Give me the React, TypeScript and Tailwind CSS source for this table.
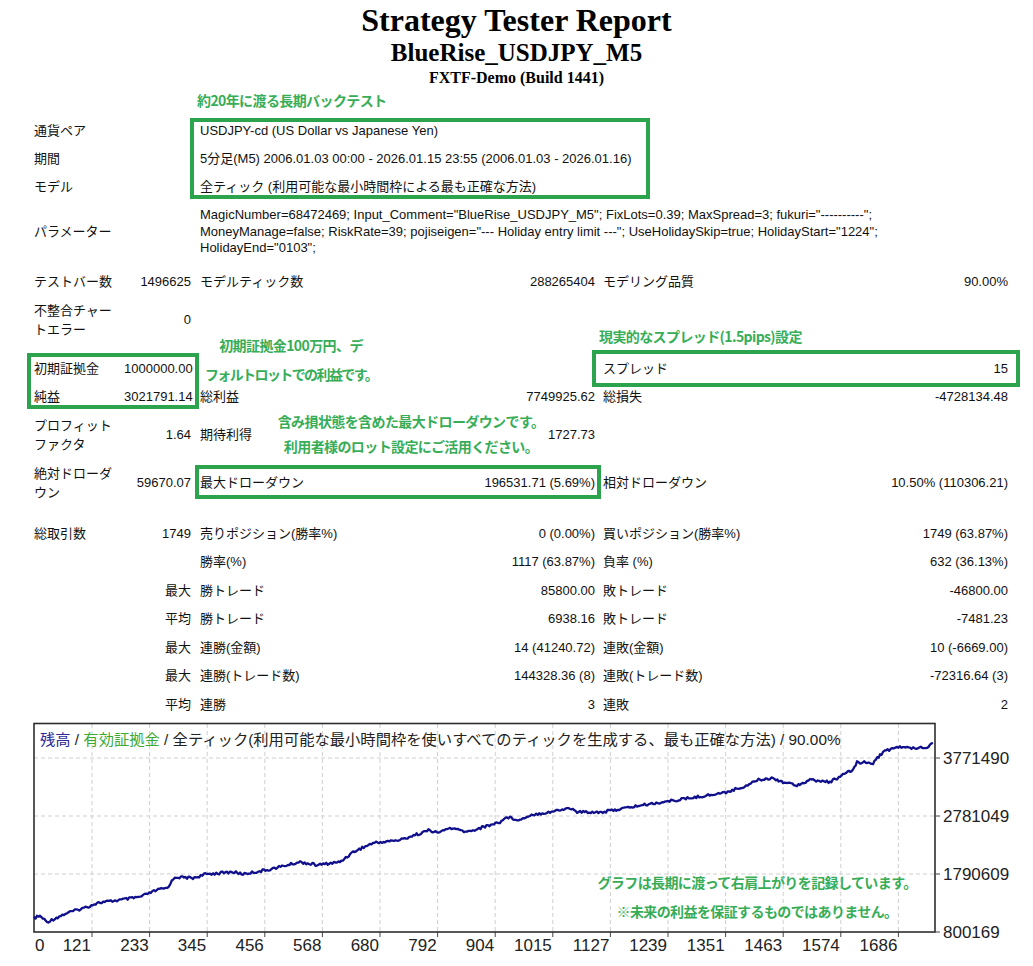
import React from "react";

const SANS = "font-['Liberation_Sans','Noto_Sans_CJK_JP',sans-serif]";
const NOTE = "font-['Noto_Sans_CJK_JP',sans-serif] font-bold text-[#37ad57] text-[14px] tracking-[-0.6px] whitespace-nowrap";
const BOX = "absolute border-[4px] border-[#2ca44e] pointer-events-none";

type Stat = {
  l1?: React.ReactNode;
  v1?: string;
  l2?: string;
  v2?: string;
  l3?: string;
  v3?: string;
  h: string;
};

const stats: Stat[] = [
  { l1: "テストバー数", v1: "1496625", l2: "モデルティック数", v2: "288265404", l3: "モデリング品質", v3: "90.00%", h: "h-[28px]" },
  { l1: <>不整合チャー<br />トエラー</>, v1: "0", h: "h-[48px]" },
  { h: "h-[10px]" },
  { l1: "初期証拠金", v1: "1000000.00", l3: "スプレッド", v3: "15", h: "h-[28.5px]" },
  { l1: "純益", v1: "3021791.14", l2: "総利益", v2: "7749925.62", l3: "総損失", v3: "-4728134.48", h: "h-[28.5px]" },
  { l1: <>プロフィット<br />ファクタ</>, v1: "1.64", l2: "期待利得", v2: "1727.73", h: "h-[48px]" },
  { l1: <>絶対ドローダ<br />ウン</>, v1: "59670.07", l2: "最大ドローダウン", v2: "196531.71 (5.69%)", l3: "相対ドローダウン", v3: "10.50% (110306.21)", h: "h-[48px]" },
  { h: "h-[12px]" },
  { l1: "総取引数", v1: "1749", l2: "売りポジション(勝率%)", v2: "0 (0.00%)", l3: "買いポジション(勝率%)", v3: "1749 (63.87%)", h: "h-[28.5px]" },
  { l2: "勝率(%)", v2: "1117 (63.87%)", l3: "負率 (%)", v3: "632 (36.13%)", h: "h-[28.5px]" },
  { v1: "最大", l2: "勝トレード", v2: "85800.00", l3: "敗トレード", v3: "-46800.00", h: "h-[28.5px]" },
  { v1: "平均", l2: "勝トレード", v2: "6938.16", l3: "敗トレード", v3: "-7481.23", h: "h-[28.5px]" },
  { v1: "最大", l2: "連勝(金額)", v2: "14 (41240.72)", l3: "連敗(金額)", v3: "10 (-6669.00)", h: "h-[28.5px]" },
  { v1: "最大", l2: "連勝(トレード数)", v2: "144328.36 (8)", l3: "連敗(トレード数)", v3: "-72316.64 (3)", h: "h-[28.5px]" },
  { v1: "平均", l2: "連勝", v2: "3", l3: "連敗", v3: "2", h: "h-[28.5px]" },
];

function StatRow({ s }: { s: Stat }) {
  return (
    <div className={`flex items-center pl-[34px] text-[13px] ${s.h}`}>
      <div className="w-[90px] leading-[19.5px]">{s.l1}</div>
      <div className="w-[67px] text-right whitespace-nowrap">{s.v1}</div>
      <div className="ml-[9px] w-[395px] flex justify-between whitespace-nowrap">
        <span>{s.l2}</span>
        <span>{s.v2}</span>
      </div>
      <div className="ml-[8px] w-[405px] flex justify-between whitespace-nowrap">
        <span>{s.l3}</span>
        <span>{s.v3}</span>
      </div>
    </div>
  );
}

const TOP = 722;
const anchors: [number, number][] = [
  [34, 918], [40, 916], [47, 922], [67, 913], [87, 907], [97, 903], [120, 900], [140, 897],
  [157, 890], [167, 888], [175, 877], [193, 878], [207, 874], [233, 872], [243, 874], [267, 870],
  [300, 862], [317, 865], [340, 862], [353, 852], [373, 843], [400, 840], [430, 830], [437, 833],
  [450, 828], [467, 832], [500, 822], [507, 817], [520, 820], [530, 815], [550, 812], [570, 808],
  [577, 812], [603, 812], [643, 805], [677, 800], [723, 793], [743, 787], [757, 780], [773, 778],
  [783, 782], [797, 785], [810, 780], [830, 782], [843, 775], [853, 770], [857, 762], [873, 763],
  [883, 752], [897, 747], [910, 748], [927, 747], [933, 743],
];

function noise(i: number) {
  const v = Math.sin(i * 12.9898) * 43758.5453;
  return v - Math.floor(v) - 0.5;
}

function curvePoints() {
  const pts: string[] = [];
  let n = 0;
  for (let a = 0; a < anchors.length - 1; a++) {
    const [x0, y0] = anchors[a];
    const [x1, y1] = anchors[a + 1];
    const steps = Math.max(1, Math.round((x1 - x0) / 1.5));
    for (let k = 0; k < steps; k++) {
      const t = k / steps;
      const x = x0 + (x1 - x0) * t;
      const y = y0 + (y1 - y0) * t + noise(n++) * 2.6;
      pts.push(`${x.toFixed(1)},${(y - TOP).toFixed(1)}`);
    }
  }
  const last = anchors[anchors.length - 1];
  pts.push(`${last[0]},${last[1] - TOP}`);
  return pts.join(" ");
}

const xLabels = ["121", "233", "345", "456", "568", "680", "792", "904", "1015", "1127", "1239", "1351", "1463", "1574", "1686"];
const yLabels = [
  { y: 758, t: "3771490" },
  { y: 816, t: "2781049" },
  { y: 874, t: "1790609" },
  { y: 932, t: "800169" },
];

function Chart() {
  const pts = curvePoints();
  return (
    <div className="relative h-[244px] mt-[3.5px]">
      <svg width="1033" height="244" viewBox="0 0 1033 244" className="block">
        {[36, 94, 152].map((y) => (
          <line key={y} x1="34" x2="935" y1={y} y2={y} stroke="#cfcfcf" strokeWidth="1" strokeDasharray="4 3" />
        ))}
        {xLabels.map((_, k) => {
          const x = 92 + 57.6 * k;
          return (
            <g key={k}>
              <line x1={x} x2={x} y1="2" y2="210" stroke="#cfcfcf" strokeWidth="1" strokeDasharray="4 3" />
              <line x1={x} x2={x} y1="210" y2="215" stroke="#444" strokeWidth="1" />
            </g>
          );
        })}
        <rect x="34" y="1.5" width="901" height="208.5" fill="none" stroke="#2d2d2d" strokeWidth="1.6" />
        {yLabels.map((l) => (
          <line key={l.y} x1="935" x2="940" y1={l.y - TOP} y2={l.y - TOP} stroke="#444" strokeWidth="1" />
        ))}
        <polyline points={pts} fill="none" stroke="#10108c" strokeWidth="2.3" strokeLinejoin="round" />
        <g className="font-['Liberation_Sans',sans-serif]" fontSize="17" fill="#222">
          <text x="35" y="229">0</text>
          {xLabels.map((t, k) => (
            <text key={t} x={91 + 57.6 * k} y="229" textAnchor="end">
              {t}
            </text>
          ))}
          {yLabels.map((l) => (
            <text key={l.t} x="943" y={l.y - TOP + 6}>
              {l.t}
            </text>
          ))}
        </g>
      </svg>
      <div className={`absolute left-[40px] top-[8px] text-[15.3px] leading-[20px] text-[#222] whitespace-nowrap ${SANS}`}>
        <span className="text-[#2b2b9a]">残高</span> / <span className="text-[#3aaa35]">有効証拠金</span> / 全ティック(利用可能な最小時間枠を使いすべてのティックを生成する、最も正確な方法) / 90.00%
      </div>
      <div className={`absolute left-[580px] top-[146px] w-[354px] text-center leading-[29px] ${NOTE}`}>
        <div>グラフは長期に渡って右肩上がりを記録しています。</div>
        <div>※未来の利益を保証するものではありません。</div>
      </div>
    </div>
  );
}

export default function App() {
  return (
    <div className={`relative w-[1033px] h-[966px] bg-white text-[#111] overflow-hidden ${SANS}`}>
      <div className="pt-[2px] text-center font-['Liberation_Serif',serif] font-bold text-black">
        <h1 className="text-[32px] leading-[36px]">Strategy Tester Report</h1>
        <h2 className="text-[25px] leading-[30px]">BlueRise_USDJPY_M5</h2>
        <p className="text-[16px] leading-[20px]">FXTF-Demo (Build 1441)</p>
      </div>

      <div className="mt-[29px] text-[13px]">
        <div className="flex items-center h-[28px] pl-[34px]">
          <div className="w-[166px]">通貨ペア</div>
          <div>USDJPY-cd (US Dollar vs Japanese Yen)</div>
        </div>
        <div className="flex items-center h-[28px] pl-[34px]">
          <div className="w-[166px]">期間</div>
          <div>5分足(M5) 2006.01.03 00:00 - 2026.01.15 23:55 (2006.01.03 - 2026.01.16)</div>
        </div>
        <div className="flex items-center h-[28px] pl-[34px]">
          <div className="w-[166px]">モデル</div>
          <div>全ティック (利用可能な最小時間枠による最も正確な方法)</div>
        </div>
        <div className="flex h-[67px] pt-[6px] pl-[34px]">
          <div className="w-[166px] h-[49.5px] flex items-center">パラメーター</div>
          <div className="leading-[16.5px] whitespace-nowrap">
            MagicNumber=68472469; Input_Comment="BlueRise_USDJPY_M5"; FixLots=0.39; MaxSpread=3; fukuri="----------";
            <br />
            MoneyManage=false; RiskRate=39; pojiseigen="--- Holiday entry limit ---"; UseHolidaySkip=true; HolidayStart="1224";
            <br />
            HolidayEnd="0103";
          </div>
        </div>
        {stats.map((s, i) => (
          <StatRow key={i} s={s} />
        ))}
      </div>

      <Chart />

      {/* annotations */}
      <div className={`absolute left-[197px] top-[90px] leading-[20px] ${NOTE}`}>約20年に渡る長期バックテスト</div>
      <div className={`${BOX} left-[190px] top-[118px] w-[460px] h-[81px]`} />

      <div className={`absolute left-[176px] top-[331px] w-[230px] text-center leading-[29px] ${NOTE}`}>
        <div>初期証拠金100万円、デ</div>
        <div className="tracking-[-1.6px]">フォルトロットでの利益です。</div>
      </div>
      <div className={`${BOX} left-[27px] top-[353px] w-[172px] h-[56px]`} />

      <div className={`absolute left-[599px] top-[326px] leading-[20px] ${NOTE}`}>現実的なスプレッド(1.5pips)設定</div>
      <div className={`${BOX} left-[592px] top-[350px] w-[428px] h-[37px]`} />

      <div className={`absolute left-[270px] top-[409px] w-[282px] text-center leading-[25px] ${NOTE}`}>
        <div>含み損状態を含めた最大ドローダウンです。</div>
        <div>利用者様のロット設定にご活用ください。</div>
      </div>
      <div className={`${BOX} left-[195px] top-[465px] w-[406px] h-[34px]`} />
    </div>
  );
}
